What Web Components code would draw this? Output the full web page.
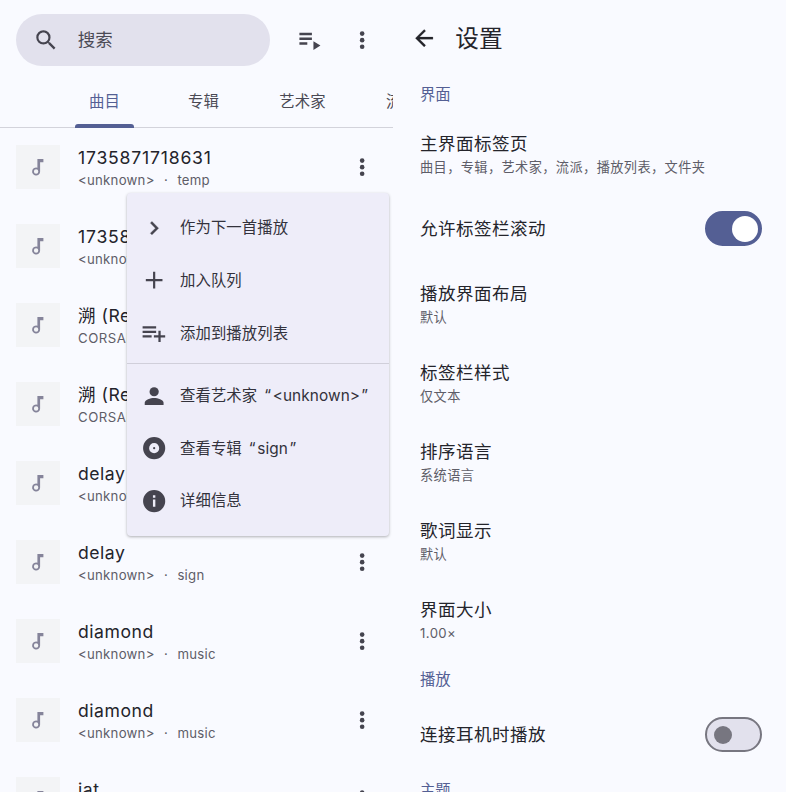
<!DOCTYPE html>
<html lang="zh-CN">
<head>
<meta charset="utf-8">
<title>音乐</title>
<style>
html,body{margin:0;height:792px;overflow:hidden;background:#f9faff}
body{--on:#24242b;--muted:#5e5d68;--icon:#45444f;--primary:#545f94;
font-family:Inter,"Noto Sans CJK SC",sans-serif;color:var(--on);font-size:15.36px;line-height:1}
</style>
</head>
<body>
<music-app></music-app>
<script>
const define = (name, render) => customElements.define(name, class extends HTMLElement {
  connectedCallback() {
    if (this.shadowRoot) return;
    const t = document.createElement('template');
    t.innerHTML = render(this);
    this.attachShadow({mode: 'open'}).append(t.content.cloneNode(true));
  }
});

const ICONS = {
  search: '<path d="M15.5 14h-.79l-.28-.27A6.47 6.47 0 0 0 16 9.5 6.5 6.5 0 1 0 9.5 16c1.61 0 3.09-.59 4.23-1.57l.27.28v.79l5 4.99L20.49 19l-4.99-5zm-6 0C7.01 14 5 11.99 5 9.5S7.01 5 9.5 5 14 7.01 14 9.5 11.99 14 9.500 14z"/>',
  queue: '<path d="M2.200 5.300h11.400v2.200H2.200zM2.200 9.600h11.400v2.200H2.200zM2.200 13.900h7.200v2.200H2.200zM15 13v7.900l6.400-3.950z"/>',
  more: '<circle cx="12" cy="6" r="2.100"/><circle cx="12" cy="12" r="2.100"/><circle cx="12" cy="18" r="2.100"/>',
  back: '<path stroke="currentColor" stroke-width=".2" d="M20 11H7.830l5.590-5.590L12 4l-8 8 8 8 1.410-1.410L7.830 13H20v-2z"/>',
  next: '<path stroke="currentColor" stroke-width=".4" d="M8.600 16.600 13.200 12 8.600 7.400 10 6l6 6-6 6z"/>',
  add: '<path d="M19.600 13H13v6.600h-2V13H4.400v-2H11V4.400h2V11h6.600z"/>',
  playlist: '<path d="M14 10H2v2h12v-2zm0-4H2v2h12V6zm4 8v-4h-2v4h-4v2h4v4h2v-4h4v-2h-4zM2 16h8v-2H2v2z" transform="translate(-.6 -.5) scale(1.03)"/>',
  person: '<circle cx="12" cy="8" r="4.200"/><path d="M3.400 20v-2c0-2.700 5.300-4.300 8.600-4.300s8.600 1.600 8.600 4.300v2z"/>',
  album: '<path fill-rule="evenodd" d="M12 1.900a10.100 10.100 0 1 0 0 20.200 10.100 10.100 0 0 0 0-20.200zm0 5.500a4.600 4.600 0 1 1 0 9.200 4.600 4.600 0 0 1 0-9.200z"/><circle cx="12" cy="12" r="1"/>',
  info: '<path fill-rule="evenodd" d="M12 1.900a10.100 10.100 0 1 0 0 20.200 10.100 10.100 0 0 0 0-20.200zM10.900 10.500h2.200v6.700h-2.200zM10.900 6.700h2.200v2.200h-2.200z"/>',
  note: '<path d="M11.400 4h6v3.200h-3.300v9.300a4 4 0 1 1-2.700-3.750zM10.100 14.300a2.200 2.200 0 1 0 0 4.400 2.200 2.200 0 0 0 0-4.400z" fill-rule="evenodd"/>'
};
define('app-icon', el => `<style>:host{display:block;flex:none;width:26.300px;height:26.300px;color:var(--icon)}svg{display:block;width:100%;height:100%;fill:currentColor}</style>
<svg viewBox="0 0 24 24">${ICONS[el.getAttribute('name')]}</svg>`);

define('search-bar', () => `<style>:host{display:flex;align-items:center;box-sizing:border-box;width:254px;height:52.500px;border-radius:27px;background:#e2e1ed;padding-left:16.700px;gap:18.800px;font-size:17.500px;color:#4b4a55}</style>
<app-icon name="search"></app-icon><slot></slot>`);

define('tab-item', () => `<style>:host{display:flex;flex:none;width:99px;margin-top:10px;flex-direction:column;align-items:center;justify-content:center;position:relative;color:#4a4954;letter-spacing:.1px}
:host([active]){color:var(--primary)}
:host([active])::after{content:"";position:absolute;left:20px;right:20px;bottom:-1px;height:3.500px;border-radius:3px 3px 0 0;background:var(--primary)}</style><slot></slot>`);
define('tab-bar', () => `<style>:host{display:flex;box-sizing:border-box;height:61px;padding:0 0 0 55px;border-bottom:1.500px solid #d3d3db}</style><slot></slot>`);

define('track-row', el => `<style>:host{display:flex;align-items:center;box-sizing:border-box;height:79px;padding:0 17.500px 0 16px}
.art{display:flex;align-items:center;justify-content:center;width:44px;height:44px;background:#f3f4f6;margin-right:18px}
.art app-icon{color:#85849a;width:24px;height:24px}
.text{flex:1;display:flex;flex-direction:column;padding-top:2px;white-space:pre}
.t{font-size:17.600px;line-height:24px;letter-spacing:${/^\d+$/.test(el.getAttribute('name')) ? '.8px' : '.52px'}}
.s{font-size:13.200px;line-height:22px;margin-top:-1px;letter-spacing:${el.textContent === 'CORSAK' ? '.5px' : '.26px'};word-spacing:.7px;color:var(--muted)}</style>
<div class="art"><app-icon name="note"></app-icon></div>
<div class="text"><span class="t">${el.getAttribute('name')}</span><span class="s"><slot></slot></span></div>
<app-icon name="more"></app-icon>`);

define('menu-item', el => `<style>:host{display:flex;align-items:center;height:52.700px;padding-left:13.600px;gap:13.100px;letter-spacing:.1px;white-space:nowrap}</style>
<app-icon name="${el.getAttribute('icon')}"></app-icon><span><slot></slot></span>`);
define('popup-menu', () => `<style>:host{display:block;box-sizing:border-box;position:absolute;left:127px;top:192.700px;width:262px;height:343.500px;padding:8.800px 0;background:#eeedf9;border-radius:4px;box-shadow:0 1px 3px #0000004d;color:#33323c}
::slotted(hr){border:0;height:1.500px;margin:3.200px 0 5.200px;background:#d0cfda}</style><slot></slot>`);

define('toggle-switch', el => `<style>:host{display:flex;align-items:center;box-sizing:border-box;width:57px;height:35px;border:2px solid #777680;border-radius:18px;background:#e2e1ed;padding:0 7px}
i{width:18px;height:18px;border-radius:50%;background:#777680}
:host([on]){background:var(--primary);border-color:var(--primary);justify-content:flex-end;padding:0 2.500px}
:host([on]) i{width:26px;height:26px;background:#fff}</style><i></i>`);
define('setting-row', el => `<style>:host{display:flex;align-items:center;justify-content:space-between;box-sizing:border-box;height:79px;padding:0 24px 1px 27px}
:host([switch]){height:71px;padding-bottom:4px}
.t{display:block;font-size:17.500px;letter-spacing:.5px;line-height:24px}
.s{display:block;font-size:13.200px;letter-spacing:.4px;line-height:22px;color:var(--muted)}</style>
<div><span class="t">${el.getAttribute('name')}</span>${el.hasAttribute('switch') ? '' : '<span class="s"><slot></slot></span>'}</div>
${el.hasAttribute('switch') ? '<slot></slot>' : ''}`);
define('setting-header', () => `<style>:host{display:flex;align-items:center;height:39px;padding-left:27px;color:var(--primary);letter-spacing:0}</style><slot></slot>`);
define('app-header', () => `<style>:host{display:flex;align-items:center;height:75px;padding:2px 0 0 18px;box-sizing:border-box;gap:18px;font-size:23.700px}app-icon{color:#24242b}</style><app-icon name="back"></app-icon><slot></slot>`);

define('library-pane', () => `<style>:host{display:block;position:relative;overflow:hidden;height:792px}
.top{display:flex;align-items:center;box-sizing:border-box;height:66.500px;padding:13.500px 17.500px 0 16px}
.top app-icon:nth-of-type(1){margin-left:27px}.top app-icon:nth-of-type(2){margin-left:auto}</style>
<div class="top"><search-bar>搜索</search-bar><app-icon name="queue"></app-icon><app-icon name="more"></app-icon></div>
<tab-bar><tab-item active>曲目</tab-item><tab-item>专辑</tab-item><tab-item>艺术家</tab-item><tab-item>流派</tab-item></tab-bar>
<track-row name="1735871718631">&lt;unknown&gt;  ·  temp</track-row>
<track-row name="1735871718631">&lt;unknown&gt;  ·  temp</track-row>
<track-row name="溯 (Re">CORSAK</track-row>
<track-row name="溯 (Re">CORSAK</track-row>
<track-row name="delay">&lt;unknown&gt;</track-row>
<track-row name="delay">&lt;unknown&gt;  ·  sign</track-row>
<track-row name="diamond">&lt;unknown&gt;  ·  music</track-row>
<track-row name="diamond">&lt;unknown&gt;  ·  music</track-row>
<track-row name="jat">&lt;unknown&gt;  ·  music</track-row>
<popup-menu>
<menu-item icon="next">作为下一首播放</menu-item>
<menu-item icon="add">加入队列</menu-item>
<menu-item icon="playlist">添加到播放列表</menu-item>
<hr>
<menu-item icon="person">查看艺术家<span style="margin-left:7px">“</span><span style="margin-left:1.500px">&lt;unknown&gt;</span><span style="margin-left:1px">”</span></menu-item>
<menu-item icon="album">查看专辑<span style="margin-left:7px">“</span><span style="margin-left:1.500px">sign</span><span style="margin-left:1.500px">”</span></menu-item>
<menu-item icon="info">详细信息</menu-item>
</popup-menu>`);

define('settings-pane', () => `<style>:host{display:block;overflow:hidden;height:792px}setting-header:first-of-type{margin-bottom:2px}
setting-header:nth-of-type(2){margin-top:-1px}
setting-header + setting-row[switch]{margin:2px 0 -1px}</style>
<app-header>设置</app-header>
<setting-header>界面</setting-header>
<setting-row name="主界面标签页">曲目，专辑，艺术家，流派，播放列表，文件夹</setting-row>
<setting-row name="允许标签栏滚动" switch><toggle-switch on></toggle-switch></setting-row>
<setting-row name="播放界面布局">默认</setting-row>
<setting-row name="标签栏样式">仅文本</setting-row>
<setting-row name="排序语言">系统语言</setting-row>
<setting-row name="歌词显示">默认</setting-row>
<setting-row name="界面大小">1.00×</setting-row>
<setting-header>播放</setting-header>
<setting-row name="连接耳机时播放" switch><toggle-switch></toggle-switch></setting-row>
<setting-header>主题</setting-header>`);

define('music-app', () => `<style>:host{display:grid;grid-template-columns:393px 393px;height:792px;overflow:hidden}</style>
<library-pane></library-pane><settings-pane></settings-pane>`);
</script>
</body>
</html>
